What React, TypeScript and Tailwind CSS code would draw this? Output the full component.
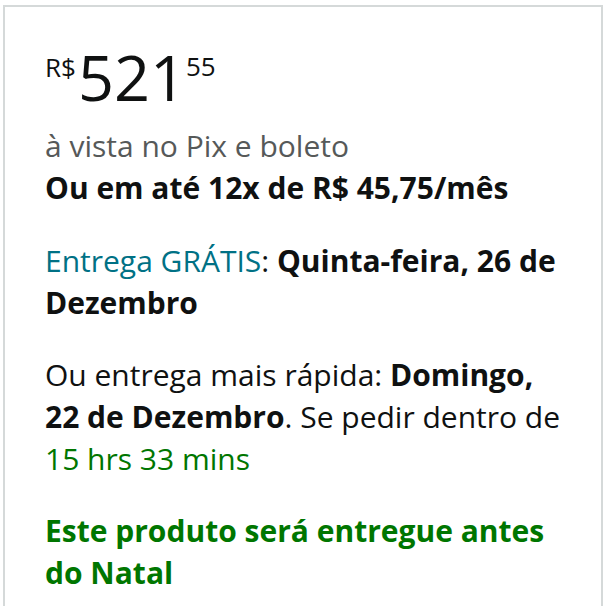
export default function App() {
  return (
    <div className="min-h-[606px] bg-white pl-[3px] pt-[5px] font-['Open_Sans',sans-serif] text-[#0f1111]">
      <div className="w-[600px] h-[620px] border-2 border-[#d5d9d9] px-[40px] pt-[38px]">
        <div className="flex items-start leading-none">
          <span className="text-[26px] mt-[9px]">R$</span>
          <span className="text-[63px] leading-[63px] ml-[2px]">521</span>
          <span className="text-[26px] mt-[8px]">55</span>
        </div>

        <div className="mt-[17px] text-[30px] leading-[42px]">
          <div className="text-[#565959]">à vista no Pix e boleto</div>
          <div className="font-bold">Ou em até 12x de R$ 45,75/mês</div>
        </div>

        <p className="mt-[31px] text-[30px] leading-[42px]">
          <span className="text-[#007185]">Entrega GRÁTIS</span>:{' '}
          <span className="font-bold">Quinta-feira, 26 de Dezembro</span>
        </p>

        <p className="mt-[30px] text-[30px] leading-[42px]">
          Ou entrega mais rápida: <span className="font-bold">Domingo, 22 de Dezembro</span>. Se pedir dentro de{' '}
          <span className="text-[#007600]">15 hrs 33 mins</span>
        </p>

        <p className="mt-[30px] text-[30px] leading-[42px] font-bold text-[#007600]">
          Este produto será entregue antes do Natal
        </p>
      </div>
    </div>
  );
}
